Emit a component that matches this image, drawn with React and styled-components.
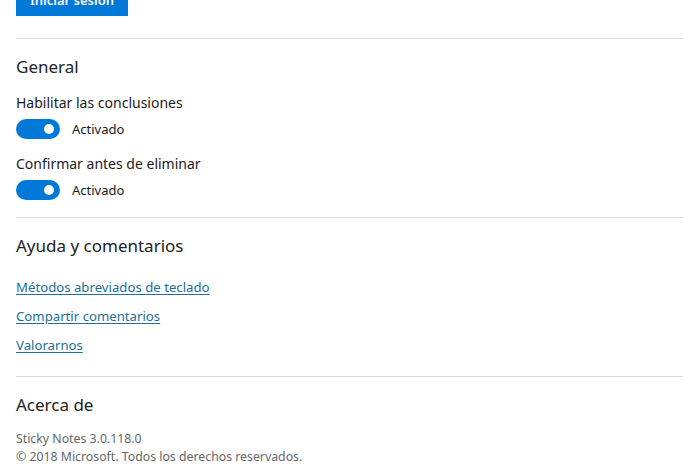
import React from 'react'
import styled, { createGlobalStyle } from 'styled-components'

const Global = createGlobalStyle`
    html, body {
        margin: 0;
        padding: 0;
        background: #ffffff;
        overflow: hidden;
    }
    body {
        font-family: 'Noto Sans', 'Open Sans', sans-serif;
        color: #000000;
    }`

export default function App() {
    const general = [
        { label: 'Habilitar las conclusiones', on: true },
        { label: 'Confirmar antes de eliminar', on: true },
    ]
    const links = ['Métodos abreviados de teclado', 'Compartir comentarios', 'Valorarnos']

    return (
        <Page>
            <Global />
            <Account>
                <LoginButton>Iniciar sesión</LoginButton>
            </Account>

            <Section>
                <Title>General</Title>
                {general.map((item) => (
                    <Setting key={item.label}>
                        <Label>{item.label}</Label>
                        <ToggleRow>
                            <Toggle on={item.on}>
                                <Knob on={item.on} />
                            </Toggle>
                            <State>{item.on ? 'Activado' : 'Desactivado'}</State>
                        </ToggleRow>
                    </Setting>
                ))}
            </Section>

            <Section pad="22px">
                <Title>Ayuda y comentarios</Title>
                <Links>
                    {links.map((l) => (
                        <Link key={l} href="#">{l}</Link>
                    ))}
                </Links>
            </Section>

            <Section last>
                <Title>Acerca de</Title>
                <About>
                    <span>Sticky Notes 3.0.118.0</span>
                    <span>© 2018 Microsoft. Todos los derechos reservados.</span>
                </About>
            </Section>
        </Page>
    )
}

const Page = styled.div`
    width: 694px;
    height: 470px;
    padding: 0 11px 0 16px;
    box-sizing: border-box;
    display: flex;
    flex-direction: column;`

const Account = styled.div`
    display: flex;
    padding-bottom: 22px;
    border-bottom: 1px solid #dcdcdc;`

const LoginButton = styled.button`
    margin-top: -16px;
    width: 112px;
    height: 32px;
    border: none;
    background: #0078d7;
    color: #ffffff;
    font-family: 'Noto Sans', sans-serif;
    font-weight: 600;
    font-size: 13px;
    padding: 0;`

const Section = styled.div`
    display: flex;
    flex-direction: column;
    padding: 16px 0 ${(p) => (p.last ? '0' : p.pad || '17px')};
    border-bottom: ${(p) => (p.last ? 'none' : '1px solid #dcdcdc')};`

const Title = styled.h2`
    margin: 0;
    font-weight: 400;
    font-size: 17px;
    line-height: 24px;
    color: #222222;`

const Setting = styled.div`
    display: flex;
    flex-direction: column;
    margin-top: 15px;
    & + & {
        margin-top: 16px;
    }`

const Label = styled.span`
    font-size: 14px;
    line-height: 18px;
    color: #1a1a1a;`

const ToggleRow = styled.div`
    display: flex;
    align-items: center;
    gap: 12px;
    margin-top: 7px;
    height: 20px;`

const Toggle = styled.div`
    width: 44px;
    height: 20px;
    border-radius: 10px;
    box-sizing: border-box;
    background: ${(p) => (p.on ? '#0078d7' : '#ffffff')};
    border: ${(p) => (p.on ? 'none' : '2px solid #333')};
    display: flex;
    align-items: center;
    justify-content: ${(p) => (p.on ? 'flex-end' : 'flex-start')};
    padding: 0 6px;`

const Knob = styled.span`
    width: 10px;
    height: 10px;
    border-radius: 50%;
    background: ${(p) => (p.on ? '#ffffff' : '#333')};`

const State = styled.span`
    font-size: 13px;
    line-height: 20px;
    color: #1a1a1a;`

const Links = styled.div`
    display: flex;
    flex-direction: column;
    align-items: flex-start;
    gap: 11px;
    margin-top: 20px;`

const Link = styled.a`
    font-size: 13.2px;
    line-height: 18px;
    color: #236e99;
    text-decoration: underline;
    text-underline-offset: 2px;`

const About = styled.div`
    display: flex;
    flex-direction: column;
    margin-top: 13px;
    font-size: 12.3px;
    line-height: 18px;
    color: #666666;`
